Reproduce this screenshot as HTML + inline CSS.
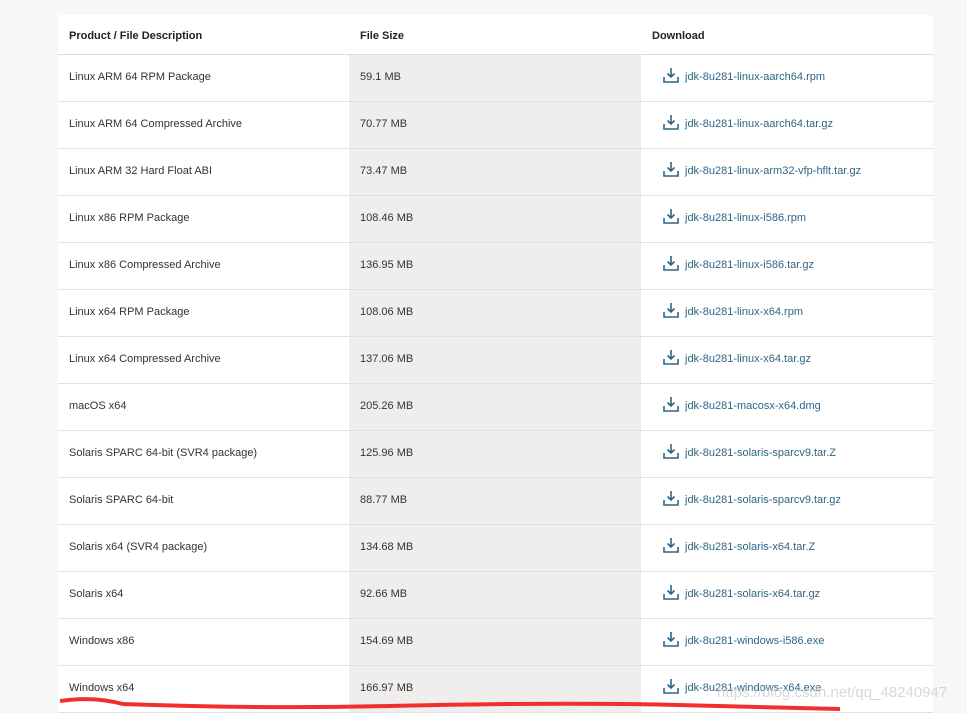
<!DOCTYPE html>
<html><head><style>
body{margin:0;width:967px;height:711px;background:#f8f7f7;position:relative;overflow:hidden;font-family:"Liberation Sans",sans-serif;font-size:11px;color:#333}
table{position:absolute;left:58px;top:15px;width:875px;border-collapse:collapse;background:#fff}
td,th{height:43px;border-bottom:1px solid #e2e1df;padding:0 0 3px 11px;text-align:left;vertical-align:middle}
th{font-weight:bold;color:#222;height:37px;border-bottom:1px solid #ddd;padding:2px 0 0 11px}
td:nth-child(2){background:#efeeec}
td:nth-child(1),th:nth-child(1){width:280px}
td:nth-child(2),th:nth-child(2){width:281px}
td:nth-child(3){padding-left:22px;color:#2e6586}
td:nth-child(3) span{display:flex;align-items:center}
svg.i{margin-right:6px;margin-top:-4px}
.red{position:absolute;left:58px;top:690px}
.wm{position:absolute;left:717px;top:684px;color:rgba(200,200,200,.7);font-size:15px}
</style></head><body>
<table>
<tr><th>Product / File Description</th><th>File Size</th><th>Download</th></tr>
<tr><td>Linux ARM 64 RPM Package</td><td>59.1 MB</td><td><span><svg class="i" width="16" height="16" viewBox="0 0 16 16" fill="none" stroke="#2e6586" stroke-width="1.6"><path d="M8 1v9M4.5 6.5L8 10l3.5-3.5M1 10v5h14v-5"/></svg>jdk-8u281-linux-aarch64.rpm</span></td></tr>
<tr><td>Linux ARM 64 Compressed Archive</td><td>70.77 MB</td><td><span><svg class="i" width="16" height="16" viewBox="0 0 16 16" fill="none" stroke="#2e6586" stroke-width="1.6"><path d="M8 1v9M4.5 6.5L8 10l3.5-3.5M1 10v5h14v-5"/></svg>jdk-8u281-linux-aarch64.tar.gz</span></td></tr>
<tr><td>Linux ARM 32 Hard Float ABI</td><td>73.47 MB</td><td><span><svg class="i" width="16" height="16" viewBox="0 0 16 16" fill="none" stroke="#2e6586" stroke-width="1.6"><path d="M8 1v9M4.5 6.5L8 10l3.5-3.5M1 10v5h14v-5"/></svg>jdk-8u281-linux-arm32-vfp-hflt.tar.gz</span></td></tr>
<tr><td>Linux x86 RPM Package</td><td>108.46 MB</td><td><span><svg class="i" width="16" height="16" viewBox="0 0 16 16" fill="none" stroke="#2e6586" stroke-width="1.6"><path d="M8 1v9M4.5 6.5L8 10l3.5-3.5M1 10v5h14v-5"/></svg>jdk-8u281-linux-i586.rpm</span></td></tr>
<tr><td>Linux x86 Compressed Archive</td><td>136.95 MB</td><td><span><svg class="i" width="16" height="16" viewBox="0 0 16 16" fill="none" stroke="#2e6586" stroke-width="1.6"><path d="M8 1v9M4.5 6.5L8 10l3.5-3.5M1 10v5h14v-5"/></svg>jdk-8u281-linux-i586.tar.gz</span></td></tr>
<tr><td>Linux x64 RPM Package</td><td>108.06 MB</td><td><span><svg class="i" width="16" height="16" viewBox="0 0 16 16" fill="none" stroke="#2e6586" stroke-width="1.6"><path d="M8 1v9M4.5 6.5L8 10l3.5-3.5M1 10v5h14v-5"/></svg>jdk-8u281-linux-x64.rpm</span></td></tr>
<tr><td>Linux x64 Compressed Archive</td><td>137.06 MB</td><td><span><svg class="i" width="16" height="16" viewBox="0 0 16 16" fill="none" stroke="#2e6586" stroke-width="1.6"><path d="M8 1v9M4.5 6.5L8 10l3.5-3.5M1 10v5h14v-5"/></svg>jdk-8u281-linux-x64.tar.gz</span></td></tr>
<tr><td>macOS x64</td><td>205.26 MB</td><td><span><svg class="i" width="16" height="16" viewBox="0 0 16 16" fill="none" stroke="#2e6586" stroke-width="1.6"><path d="M8 1v9M4.5 6.5L8 10l3.5-3.5M1 10v5h14v-5"/></svg>jdk-8u281-macosx-x64.dmg</span></td></tr>
<tr><td>Solaris SPARC 64-bit (SVR4 package)</td><td>125.96 MB</td><td><span><svg class="i" width="16" height="16" viewBox="0 0 16 16" fill="none" stroke="#2e6586" stroke-width="1.6"><path d="M8 1v9M4.5 6.5L8 10l3.5-3.5M1 10v5h14v-5"/></svg>jdk-8u281-solaris-sparcv9.tar.Z</span></td></tr>
<tr><td>Solaris SPARC 64-bit</td><td>88.77 MB</td><td><span><svg class="i" width="16" height="16" viewBox="0 0 16 16" fill="none" stroke="#2e6586" stroke-width="1.6"><path d="M8 1v9M4.5 6.5L8 10l3.5-3.5M1 10v5h14v-5"/></svg>jdk-8u281-solaris-sparcv9.tar.gz</span></td></tr>
<tr><td>Solaris x64 (SVR4 package)</td><td>134.68 MB</td><td><span><svg class="i" width="16" height="16" viewBox="0 0 16 16" fill="none" stroke="#2e6586" stroke-width="1.6"><path d="M8 1v9M4.5 6.5L8 10l3.5-3.5M1 10v5h14v-5"/></svg>jdk-8u281-solaris-x64.tar.Z</span></td></tr>
<tr><td>Solaris x64</td><td>92.66 MB</td><td><span><svg class="i" width="16" height="16" viewBox="0 0 16 16" fill="none" stroke="#2e6586" stroke-width="1.6"><path d="M8 1v9M4.5 6.5L8 10l3.5-3.5M1 10v5h14v-5"/></svg>jdk-8u281-solaris-x64.tar.gz</span></td></tr>
<tr><td>Windows x86</td><td>154.69 MB</td><td><span><svg class="i" width="16" height="16" viewBox="0 0 16 16" fill="none" stroke="#2e6586" stroke-width="1.6"><path d="M8 1v9M4.5 6.5L8 10l3.5-3.5M1 10v5h14v-5"/></svg>jdk-8u281-windows-i586.exe</span></td></tr>
<tr><td>Windows x64</td><td>166.97 MB</td><td><span><svg class="i" width="16" height="16" viewBox="0 0 16 16" fill="none" stroke="#2e6586" stroke-width="1.6"><path d="M8 1v9M4.5 6.5L8 10l3.5-3.5M1 10v5h14v-5"/></svg>jdk-8u281-windows-x64.exe</span></td></tr>
</table>
<div class="wm">https://blog.csdn.net/qq_48240947</div>
<svg class="red" width="800" height="22" viewBox="0 0 800 22"><path d="M2 11 Q35 6 65 14 Q200 19 330 16 Q500 12 620 15 Q700 17 782 19" stroke="#f03030" stroke-width="4" fill="none"/></svg>
</body></html>
